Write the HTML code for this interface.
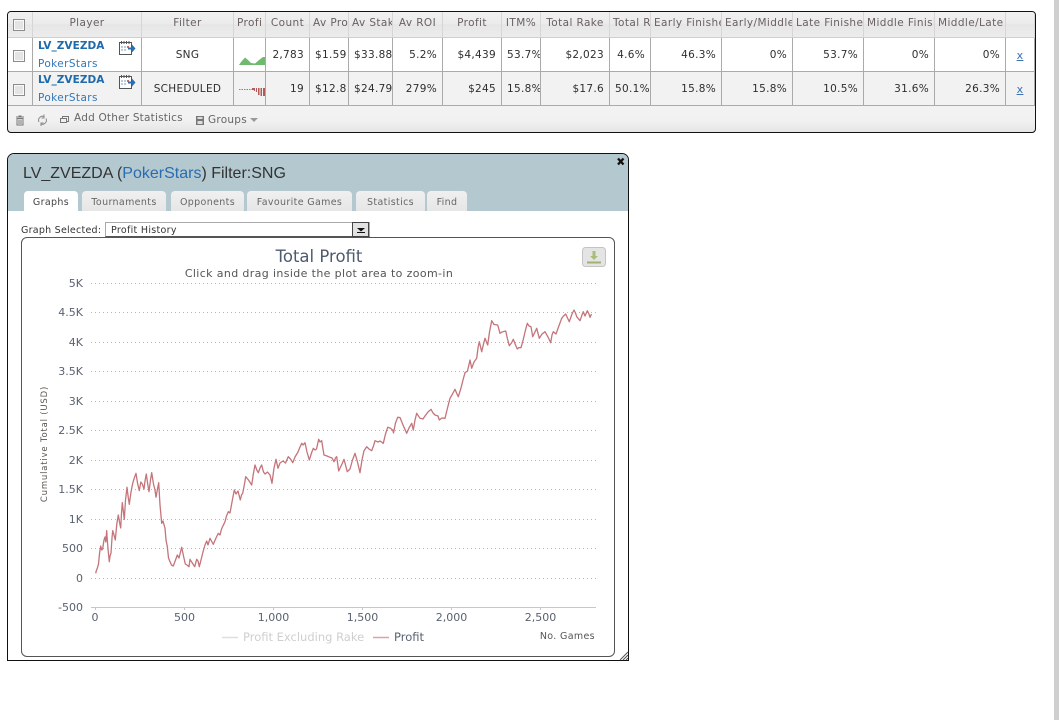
<!DOCTYPE html>
<html><head><meta charset="utf-8"><style>
html,body{margin:0;padding:0;background:#fff;width:1059px;height:720px;overflow:hidden}
body{position:relative;font-family:"DejaVu Sans","Liberation Sans",sans-serif;font-size:10.5px;color:#2e2e2e}
.a{position:absolute;white-space:nowrap}
#sb{position:absolute;left:1054px;top:0;width:5px;height:720px;background:#cfcfcf}
#box{position:absolute;left:7px;top:11px;width:1027px;height:120px;border:1px solid #111;border-radius:4px;background:linear-gradient(#ededed,#f3f3f3 90px,#f1f1f1 108px,#e6e6e6 120px);overflow:hidden}
table{border-collapse:separate;border-spacing:0;table-layout:fixed;width:1027px;position:absolute;left:0;top:0}
td,th{box-sizing:border-box;padding:0 5px;overflow:hidden;white-space:nowrap;font-weight:normal}
th{height:26px;padding:0 3px 4px;text-align:center;color:#6a6060;letter-spacing:.4px;background:linear-gradient(#f0f0f0,#ececec 45%,#e6e6e6 50%,#ececec);border-right:1px solid #d6d6d6;border-bottom:1px solid #cfcfcf}
td{height:34px;text-align:right;background:#fff;border-right:1px solid #aaa;border-bottom:1px solid #aaa;letter-spacing:.3px;padding-top:0}
tr.b td{background:#f2f2f2}
td.c{text-align:center}
td.l{padding-top:1px;font-size:11px}
.ck{position:absolute;width:10px;height:10px;border:1px solid #8c8c8c;background:#e4e4e4;box-shadow:inset 0 0 0 1px #fafafa}
.n{font-weight:bold;color:#1f6aab;letter-spacing:.05px}
.p{color:#3277b8;letter-spacing:.4px}
.x{color:#3b6fb5;text-decoration:underline}
#dlg{position:absolute;left:7px;top:153px;width:620px;height:506px;border:1px solid #111;border-radius:7px 7px 0 0;background:#fff}
#hd{position:absolute;left:0;top:0;width:100%;height:57px;background:#b3c8cf;border-radius:6px 6px 0 0}
.t{position:absolute;top:191px;height:20px;line-height:23px;text-align:center;background:linear-gradient(#f0f0f0,#e6e6e6);color:#666;border-radius:4px 4px 0 0;letter-spacing:.35px;font-size:9.5px}
#chart{position:absolute;left:21px;top:237px;width:592px;height:418px;border:1px solid #555;border-radius:6px;background:#fff}
svg text{font-family:"DejaVu Sans","Liberation Sans",sans-serif}
</style></head><body>
<div id="sb"></div>

<div id="box">
<table><colgroup>
<col style="width:25px"><col style="width:109px"><col style="width:92px"><col style="width:32px"><col style="width:44px"><col style="width:39px"><col style="width:44px"><col style="width:50px"><col style="width:59px"><col style="width:39px"><col style="width:69px"><col style="width:41px"><col style="width:71px"><col style="width:71px"><col style="width:71px"><col style="width:71px"><col style="width:71px"><col style="width:29px">
</colgroup>
<tr><th></th><th>Player</th><th>Filter</th><th style="text-align:left">Profi</th><th>Count</th><th style="text-align:left">Av Prof</th><th style="text-align:left">Av Stake</th><th>Av ROI</th><th>Profit</th><th>ITM%</th><th>Total Rake</th><th style="text-align:left">Total Rake%</th><th style="text-align:left">Early Finishes</th><th style="text-align:left">Early/Middle</th><th style="text-align:left">Late Finishes</th><th style="text-align:left">Middle Finishes</th><th style="text-align:left">Middle/Late</th><th></th></tr>
<tr><td></td><td></td><td class="c">SNG</td><td style="padding:0"></td><td>2,783</td><td>$1.59</td><td>$33.88</td><td>5.2%</td><td>$4,439</td><td>53.7%</td><td>$2,023</td><td>4.6%</td><td>46.3%</td><td>0%</td><td>53.7%</td><td>0%</td><td>0%</td><td class="c l"><span class="x">x</span></td></tr>
<tr class="b"><td></td><td></td><td class="c">SCHEDULED</td><td style="padding:0"></td><td>19</td><td>$12.8</td><td>$24.79</td><td>279%</td><td>$245</td><td>15.8%</td><td>$17.6</td><td>50.1%</td><td>15.8%</td><td>15.8%</td><td>10.5%</td><td>31.6%</td><td>26.3%</td><td class="c l"><span class="x">x</span></td></tr>
</table>
</div>

<div class="ck" style="left:13px;top:19px"></div>
<div class="ck" style="left:13px;top:50px"></div>
<div class="ck" style="left:13px;top:84px"></div>

<div class="a n" style="left:38px;top:40px">LV_ZVEZDA</div>
<div class="a p" style="left:38px;top:58px">PokerStars</div>
<div class="a n" style="left:38px;top:74px">LV_ZVEZDA</div>
<div class="a p" style="left:38px;top:92px">PokerStars</div>

<div class="a" style="left:74px;top:112px;color:#666;letter-spacing:.2px">Add Other Statistics</div>
<div class="a" style="left:208px;top:114px;color:#666;letter-spacing:.25px">Groups</div>

<div id="dlg"><div id="hd"></div></div>
<div class="a" style="left:23px;top:165px;font:16px 'Liberation Sans',sans-serif;color:#333">LV_ZVEZDA (<span style="color:#2a6cb0">PokerStars</span>) Filter:SNG</div>

<div class="t" style="left:24px;width:54px;background:#fff;color:#444">Graphs</div>
<div class="t" style="left:82px;width:84px">Tournaments</div>
<div class="t" style="left:171px;width:73px">Opponents</div>
<div class="t" style="left:247px;width:105px">Favourite Games</div>
<div class="t" style="left:356px;width:69px">Statistics</div>
<div class="t" style="left:427px;width:40px">Find</div>

<div class="a" style="left:21px;top:225px;font-size:9.5px;letter-spacing:.25px;color:#333">Graph Selected:</div>
<div class="a" style="left:105px;top:222px;width:263px;height:13px;border:1px solid #aaa;border-bottom:1px solid #555;background:#fff;font-size:9.5px;letter-spacing:.3px;line-height:15px;text-indent:5px;color:#333">Profit History</div>
<div class="a" style="left:352px;top:222px;width:15px;height:13px;background:#e2e2e2;border:1px solid #444"></div>

<div id="chart"></div>

<svg width="1059" height="720" viewBox="0 0 1059 720" style="position:absolute;left:0;top:0">
<!-- sparklines -->
<path d="M239 65L241 62L245 57.5L248 60L251 63L255 63.500L259 60L263 57L265 57V65Z" fill="#6fba6f"/>
<path d="M239 89.5H252" stroke="#c46a6a" stroke-width="1" stroke-dasharray="1.5 1"/>
<path d="M252 88h2v2h-2zM254 88h1v3h-1zM256 88h1v4h-1zM258 88h1.5v7h-1.5zM260.500 88h1.500v8h-1.500zM263 88h2v8h-2z" fill="#b25a5a"/>

<!-- player action icons -->
<g fill="none" stroke="#555" stroke-width="1">
<rect x="119.500" y="42.500" width="12" height="12" fill="#fff"/>
<path d="M121.500 41v3M124 41v3M126.500 41v3M129 41v3"/>
<path d="M121 46h2v2h-2zM124 46h2v2h-2zM121 49h2v2h-2zM124 49h2v2h-2z" fill="#b7cde4" stroke="none"/>
<path d="M127 46h2v2h-2z" fill="#d66" stroke="none"/>
<path d="M128 47.500h4v-3l3.500 4-3.500 4v-3h-4z" fill="#2a70b0" stroke="none"/>
</g>
<g fill="none" stroke="#555" stroke-width="1" transform="translate(0 34)">
<rect x="119.500" y="42.500" width="12" height="12" fill="#fff"/>
<path d="M121.500 41v3M124 41v3M126.500 41v3M129 41v3"/>
<path d="M121 46h2v2h-2zM124 46h2v2h-2zM121 49h2v2h-2zM124 49h2v2h-2z" fill="#b7cde4" stroke="none"/>
<path d="M127 46h2v2h-2z" fill="#d66" stroke="none"/>
<path d="M128 47.500h4v-3l3.500 4-3.500 4v-3h-4z" fill="#2a70b0" stroke="none"/>
</g>

<!-- toolbar icons -->
<path d="M16 117h8M19 117v-1h2v1M17 118.500h6v6.500h-6zM19 119.500v4.500M21 119.500v4.500" fill="none" stroke="#777" stroke-width="1"/>
<path d="M39 122a4 4 0 0 1 5-5.500M46 118.500a4 4 0 0 1-5 5.500M44 114.500v3.500h-2.500M41 126v-3h2.500" fill="none" stroke="#888" stroke-width="1"/>
<path d="M60.500 118.500h2v-2h6v5h-2v1h-6z M62.500 118.500h4v3" fill="none" stroke="#777" stroke-width="1"/>
<path d="M196 116h8v9h-8z" fill="#777"/><path d="M197.500 117h5v2h-5zM197.500 121h5v3h-5z" fill="#ddd"/>
<path d="M250 118h8l-4 4z" fill="#999"/>

<!-- close and dropdown -->
<path d="M618 158.500l5.500 6M623.500 158.500l-5.500 6" stroke="#111" stroke-width="2.300" fill="none"/>
<path d="M357 228h8l-4 3.500z" fill="#111"/>
<rect x="357" y="232" width="8" height="1" fill="#111"/>
<path d="M620 660l8-8M623 660l5-5M626 660l2-2" stroke="#555" stroke-width="1"/>

<!-- download button -->
<rect x="582.500" y="247.500" width="23" height="19" rx="3" fill="#e4e4e4" stroke="#c4c4c4"/>
<path d="M592.500 251h3v5h2.500l-4 4-4-4h2.500z" fill="#a9bd7b"/>
<path d="M587 262.500h14" stroke="#9fb36f" stroke-width="2"/>

<!-- grid -->
<g stroke="#b5b5b5" stroke-width="1" stroke-dasharray="1 3">
<path d="M91 283.500H596M91 312.500H596M91 342.500H596M91 371.500H596M91 401.500H596M91 430.500H596M91 460.500H596M91 489.500H596M91 519.500H596M91 548.500H596M91 578.500H596"/>
</g>
<path d="M91 607.500H596" stroke="#c4c8cc"/>
<path d="M95.500 607v3M184.500 607v3M273.500 607v3M362.500 607v3M451.500 607v3M540.500 607v3" stroke="#c4c8cc"/>

<!-- titles -->
<text x="319" y="262" text-anchor="middle" font-size="16.500" fill="#4d5b6e">Total Profit</text>
<text x="319" y="277" text-anchor="middle" font-size="11" fill="#555" letter-spacing=".37">Click and drag inside the plot area to zoom-in</text>

<!-- y axis -->
<g font-size="11" fill="#5a6270" text-anchor="end">
<text x="83" y="287">5K</text><text x="83" y="316">4.5K</text><text x="83" y="346">4K</text><text x="83" y="375">3.5K</text><text x="83" y="405">3K</text><text x="83" y="434">2.5K</text><text x="83" y="464">2K</text><text x="83" y="493">1.5K</text><text x="83" y="523">1K</text><text x="83" y="552">500</text><text x="83" y="582">0</text><text x="83" y="611">-500</text>
</g>
<text transform="translate(47 444) rotate(-90)" text-anchor="middle" font-size="8.500" letter-spacing=".8" fill="#5a5450">Cumulative Total (USD)</text>

<!-- x axis -->
<g font-size="11" fill="#5a6270" text-anchor="middle">
<text x="95" y="621">0</text><text x="184.500" y="621">500</text><text x="273.500" y="621">1,000</text><text x="362.500" y="621">1,500</text><text x="451.500" y="621">2,000</text><text x="540.500" y="621">2,500</text>
</g>

<!-- data line -->
<polyline fill="none" stroke="#c4747a" stroke-width="1.300" stroke-linejoin="round" points="95.700,573.300 96.500,570 97.300,568.300 98.500,564 99.700,552 100.700,546 101.700,550 102.700,549 103.500,543 104,540 105,537 105.800,542 106.700,530.700 107.300,540 108.300,552 109.300,561.700 110,556 111,553 112,538 112.700,530.700 114,535 115.300,540 116.800,524 118.300,515 119.500,522 120.700,528 121.500,513 122.300,502.700 123.300,511 124.300,519.300 125.500,500 127,487.300 128.200,497 129.300,504.300 131,492 132.700,483.300 134.300,478 136,473.300 137.500,483 139.300,490.700 140.800,482 142.300,484 144,489 145,481 146.300,474 147.700,484 149,491.700 150.500,480 151.700,472.700 153.500,484 155,490 156,497.300 157.300,490 158.700,482.700 160,505 161.700,523.300 163,521 165,528.300 166,540 167.300,546.700 168.500,558 170,561.700 171.500,565 173.300,566 175.500,560 177.300,555 179,558 180.500,552 181.700,547.300 183.500,556 185.300,564 187,565 189,566.700 190,559.300 192.300,563 194.700,566.700 196.700,559.300 198,561 199.300,566.700 201.500,558 203.500,550 205,545 206.700,541 208,545 210,538.300 212,542 213.300,544.300 216,538 218.300,533.300 220,535 221.500,529 225,521.700 226.500,516 228.300,511.700 230,513 232.700,498.300 234.300,490 236,494 238,491 240.300,500 241.500,495 242.700,493.300 244.500,484 245.700,476.700 248.500,480 251.700,485 253.500,473 255,465 256.800,470 258.300,472.700 260,468 261.700,465 263.500,472 265,474 267.500,472 270,475 272,483.300 274,468 276,459.300 278,468.300 280,463 283,461 285.500,463 288.300,456.700 290.500,459 292.700,462.700 295,457 298,452 300,447 301.700,443.300 303,445 305,442.700 307,452 309.300,460 311.500,453 313.300,448.300 315,450 316.500,449 318.700,439.300 320,442 321.700,440.700 323,449 324,455 327,456 330,457.300 332,458 334,461.700 335.500,458 336.700,456.700 338.700,471 341,466 342.500,463 344,459.300 346,467 347.300,471.700 350,469 352.500,460 355,453.300 357.500,462 360,472.700 362,460 364,450.700 366.700,446.700 369,449 371.700,450.700 373.500,446 375,440.700 378,442 380,441 383.300,443.300 385.500,434 387.700,427.300 390,428 392.700,430 393.500,433 395.500,423 397.700,417.300 400,417.500 403,425 406.700,433.300 409,428 411.700,423.300 413.300,430 415,420 416.700,413.300 420,418.300 423,419 425,416 428,412 431,409.300 433,413 435,415 438,416 439.300,420 442,418 445,418.300 447.500,408 450,398.300 452.500,394 455,389.300 457,394 458.300,396.700 461,388 463,380 465,372.700 467.500,371 470,360 471.700,368.300 474,362 476.700,358.300 478,348 479.300,341.700 481.700,351.700 483.500,344 485,338.300 487.700,345 489.500,332 491.700,320.700 494,324.500 497.700,325 500,333.300 502,332 505.700,331 507.500,339 509.300,345.700 511.500,343 513.300,339.300 515.500,345 517.300,349 519,347.500 521,347.700 523.300,339.300 525.500,330 527.300,323.300 529,326 531,326.700 532.700,336.700 534.500,333 536.700,328.300 539.300,338.300 542,334 545,331.700 548,337 550.700,342.700 552,335 553.300,331.700 556,334 558.500,327 561.700,318.300 563.500,316 565.700,314 567.500,318 569.300,321.700 572,314 574,310 575.500,313 576.700,316.700 580,320.700 582,315 583.300,311.700 585,316 587.300,310.700 589,314 590,317.300 591.500,314"/>

<!-- legend -->
<path d="M222 637.500h16" stroke="#dedede" stroke-width="1.500"/>
<text x="243" y="641" font-size="11.500" fill="#cfcfcf">Profit Excluding Rake</text>
<path d="M373 637.500h16" stroke="#d9a5a5" stroke-width="1.500"/>
<text x="394" y="641" font-size="11.500" fill="#5a6270">Profit</text>
<text x="595" y="639" font-size="9.500" text-anchor="end" letter-spacing=".35" fill="#555">No. Games</text>
</svg>
</body></html>
